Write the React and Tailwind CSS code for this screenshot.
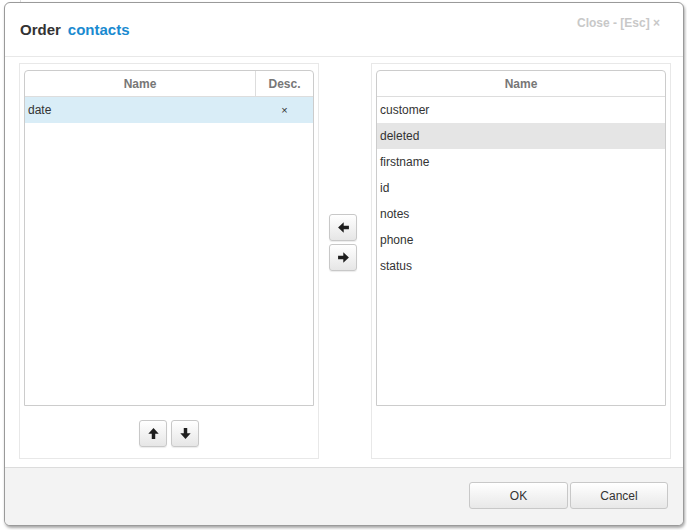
import React from "react";

const Arrow = ({ dir }) => {
  const rot = { up: 0, right: 90, down: 180, left: 270 }[dir];
  return (
    <svg width="13" height="13" viewBox="0 0 12 12" style={{ transform: `rotate(${rot}deg)` }}>
      <path d="M6 1 L10.8 6.2 L7.6 6.2 L7.6 11 L4.4 11 L4.4 6.2 L1.2 6.2 Z" fill="#1e1e1e" />
    </svg>
  );
};

const SmallBtn = ({ dir }) => (
  <button className="w-[28px] h-[27px] flex items-center justify-center rounded-[3px] border border-[#c8c8c8] bg-gradient-to-b from-[#ffffff] to-[#e6e6e6] shadow-[0_1px_1px_rgba(0,0,0,0.08)]">
    <Arrow dir={dir} />
  </button>
);

const leftRows = [{ name: "date", desc: "×", sel: true }];
const rightRows = ["customer", "deleted", "firstname", "id", "notes", "phone", "status"];

export default function App() {
  return (
    <div className="relative w-[687px] h-[530px] bg-white overflow-hidden" style={{ fontFamily: "'Liberation Sans', Arial, sans-serif" }}>
      <div className="absolute left-[20px] top-0 h-[3px] border-l border-[#ddd]" />
      <div className="absolute left-[4px] top-[2px] w-[680px] h-[524px] rounded-[6px] border border-[#9a9a9a] bg-white shadow-[1px_2px_3px_rgba(0,0,0,0.35)] flex flex-col overflow-hidden">
        <div className="h-[54px] shrink-0 border-b border-[#e8e8e8] flex items-start justify-between pl-[15px] pr-[23px]">
          <div className="mt-[16px] text-[15px] font-bold text-[#333] flex gap-[7px]">
            <span>Order</span>
            <span className="text-[#1a8ad0]">contacts</span>
          </div>
          <div className="mt-[11px] text-[12px] font-bold text-[#c8c8c8]">Close - [Esc] ×</div>
        </div>
        <div className="flex-1 flex pl-[14px] pt-[6px]">
          <div className="w-[300px] h-[396px] border border-[#e8e8e8] flex flex-col px-[4px] pt-[6px]">
            <div className="h-[336px] border border-[#ccc] rounded-t-[4px] text-[12px] text-[#333]">
              <div className="flex h-[26px] border-b border-[#ddd] text-[#777] font-bold">
                <div className="flex-1 flex items-center justify-center border-r border-[#ddd]">Name</div>
                <div className="w-[57px] flex items-center justify-center">Desc.</div>
              </div>
              {leftRows.map((r) => (
                <div key={r.name} className={`flex h-[26px] items-center ${r.sel ? "bg-[#d9edf7]" : ""}`}>
                  <div className="flex-1 pl-[3px]">{r.name}</div>
                  <div className="w-[57px] text-center text-[11px]">{r.desc}</div>
                </div>
              ))}
            </div>
            <div className="flex justify-center gap-[4px] mt-[14px]">
              <SmallBtn dir="up" />
              <SmallBtn dir="down" />
            </div>
          </div>
          <div className="w-[52px] flex flex-col items-center justify-center gap-[3px] pb-[46px] pr-[4px]">
            <SmallBtn dir="left" />
            <SmallBtn dir="right" />
          </div>
          <div className="w-[300px] h-[396px] border border-[#e8e8e8] px-[4px] pt-[6px]">
            <div className="h-[336px] border border-[#ccc] rounded-t-[4px] text-[12px] text-[#333]">
              <div className="flex h-[26px] border-b border-[#ddd] text-[#777] font-bold items-center justify-center">Name</div>
              {rightRows.map((r) => (
                <div key={r} className={`h-[26px] flex items-center pl-[3px] ${r === "deleted" ? "bg-[#e5e5e5]" : ""}`}>{r}</div>
              ))}
            </div>
          </div>
        </div>
        <div className="h-[58px] shrink-0 border-t border-[#dcdcdc] bg-[#f3f3f3] flex justify-end items-start gap-[2px] pt-[14px] pr-[15px]">
          <button className="w-[99px] h-[27px] rounded-[3px] border border-[#c8c8c8] bg-gradient-to-b from-[#ffffff] to-[#e8e8e8] text-[12px] text-[#333]">OK</button>
          <button className="w-[98px] h-[27px] rounded-[3px] border border-[#c8c8c8] bg-gradient-to-b from-[#ffffff] to-[#e8e8e8] text-[12px] text-[#333]">Cancel</button>
        </div>
      </div>
    </div>
  );
}
